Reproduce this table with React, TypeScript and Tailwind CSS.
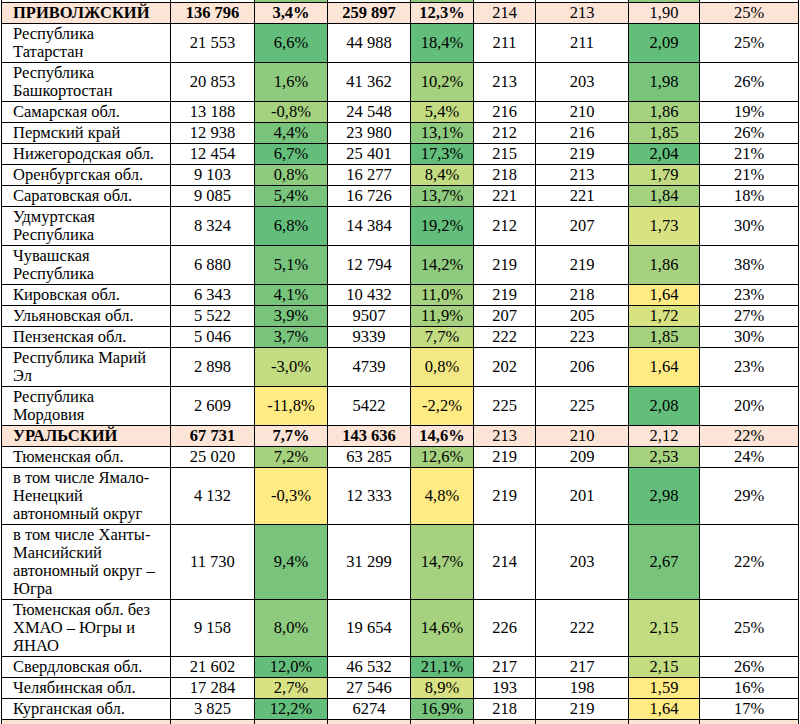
type Row = {
  name: string
  a: string
  b: string
  bc?: string
  c: string
  d: string
  dc?: string
  e: string
  f: string
  g: string
  gc?: string
  h: string
  head?: boolean
}

// conditional-format shades, yellow -> green
const G5 = 'bg-[#63be7b]'
const G4 = 'bg-[#78c47d]'
const G3 = 'bg-[#8ecb7e]'
const G2 = 'bg-[#a6d27f]'
const G1 = 'bg-[#c3dc81]'
const G0 = 'bg-[#d9e282]'
const Y = 'bg-[#ffeb84]'
const Y1 = 'bg-[#f3e884]'

const rows: Row[] = [
  { name: 'ПРИВОЛЖСКИЙ', a: '136 796', b: '3,4%', c: '259 897', d: '12,3%', e: '214', f: '213', g: '1,90', h: '25%', head: true },
  { name: 'Республика Татарстан', a: '21 553', b: '6,6%', bc: G5, c: '44 988', d: '18,4%', dc: G5, e: '211', f: '211', g: '2,09', gc: G5, h: '25%' },
  { name: 'Республика Башкортостан', a: '20 853', b: '1,6%', bc: G3, c: '41 362', d: '10,2%', dc: G2, e: '213', f: '203', g: '1,98', gc: G4, h: '26%' },
  { name: 'Самарская обл.', a: '13 188', b: '-0,8%', bc: G2, c: '24 548', d: '5,4%', dc: G1, e: '216', f: '210', g: '1,86', gc: G2, h: '19%' },
  { name: 'Пермский край', a: '12 938', b: '4,4%', bc: G4, c: '23 980', d: '13,1%', dc: G3, e: '212', f: '216', g: '1,85', gc: G2, h: '26%' },
  { name: 'Нижегородская обл.', a: '12 454', b: '6,7%', bc: G5, c: '25 401', d: '17,3%', dc: G5, e: '215', f: '219', g: '2,04', gc: G5, h: '21%' },
  { name: 'Оренбургская обл.', a: '9 103', b: '0,8%', bc: G3, c: '16 277', d: '8,4%', dc: G1, e: '218', f: '213', g: '1,79', gc: G1, h: '21%' },
  { name: 'Саратовская обл.', a: '9 085', b: '5,4%', bc: G4, c: '16 726', d: '13,7%', dc: G3, e: '221', f: '221', g: '1,84', gc: G2, h: '18%' },
  { name: 'Удмуртская Республика', a: '8 324', b: '6,8%', bc: G5, c: '14 384', d: '19,2%', dc: G5, e: '212', f: '207', g: '1,73', gc: G0, h: '30%' },
  { name: 'Чувашская Республика', a: '6 880', b: '5,1%', bc: G4, c: '12 794', d: '14,2%', dc: G3, e: '219', f: '219', g: '1,86', gc: G2, h: '38%' },
  { name: 'Кировская обл.', a: '6 343', b: '4,1%', bc: G4, c: '10 432', d: '11,0%', dc: G2, e: '219', f: '218', g: '1,64', gc: Y, h: '23%' },
  { name: 'Ульяновская обл.', a: '5 522', b: '3,9%', bc: G4, c: '9507', d: '11,9%', dc: G2, e: '207', f: '205', g: '1,72', gc: G0, h: '27%' },
  { name: 'Пензенская обл.', a: '5 046', b: '3,7%', bc: G4, c: '9339', d: '7,7%', dc: G1, e: '222', f: '223', g: '1,85', gc: G2, h: '30%' },
  { name: 'Республика Марий Эл', a: '2 898', b: '-3,0%', bc: G1, c: '4739', d: '0,8%', dc: Y1, e: '202', f: '206', g: '1,64', gc: Y, h: '23%' },
  { name: 'Республика Мордовия', a: '2 609', b: '-11,8%', bc: Y, c: '5422', d: '-2,2%', dc: Y, e: '225', f: '225', g: '2,08', gc: G5, h: '20%' },
  { name: 'УРАЛЬСКИЙ', a: '67 731', b: '7,7%', c: '143 636', d: '14,6%', e: '213', f: '210', g: '2,12', h: '22%', head: true },
  { name: 'Тюменская обл.', a: '25 020', b: '7,2%', bc: G2, c: '63 285', d: '12,6%', dc: G2, e: '219', f: '209', g: '2,53', gc: G2, h: '24%' },
  { name: 'в том числе Ямало-Ненецкий автономный округ', a: '4 132', b: '-0,3%', bc: Y, c: '12 333', d: '4,8%', dc: Y, e: '219', f: '201', g: '2,98', gc: G5, h: '29%' },
  { name: 'в том числе Ханты-Мансийский автономный округ – Югра', a: '11 730', b: '9,4%', bc: G4, c: '31 299', d: '14,7%', dc: G2, e: '214', f: '203', g: '2,67', gc: G4, h: '22%' },
  { name: 'Тюменская обл. без ХМАО – Югры и ЯНАО', a: '9 158', b: '8,0%', bc: G3, c: '19 654', d: '14,6%', dc: G2, e: '226', f: '222', g: '2,15', gc: G1, h: '25%' },
  { name: 'Свердловская обл.', a: '21 602', b: '12,0%', bc: G5, c: '46 532', d: '21,1%', dc: G5, e: '217', f: '217', g: '2,15', gc: G1, h: '26%' },
  { name: 'Челябинская обл.', a: '17 284', b: '2,7%', bc: G0, c: '27 546', d: '8,9%', dc: G0, e: '193', f: '198', g: '1,59', gc: Y, h: '16%' },
  { name: 'Курганская обл.', a: '3 825', b: '12,2%', bc: G5, c: '6274', d: '16,9%', dc: G4, e: '218', f: '219', g: '1,64', gc: Y, h: '17%' },
]

const serif = "font-['Times_New_Roman','Liberation_Serif',serif]"
const cell = `border border-black px-[4px] py-px text-center align-middle ${serif}`

function DataRow({ r }: { r: Row }) {
  const bg = r.head ? 'bg-[#fce4d6]' : 'bg-white'
  const bold = r.head ? 'font-bold' : 'font-normal'
  return (
    <tr className={bg}>
      <td className={`border border-black py-px pr-[10px] pl-[11px] text-left align-middle ${serif} ${bold}`}>{r.name}</td>
      <td className={`${cell} ${bold}`}>{r.a}</td>
      <td className={`${cell} ${bold} ${r.bc ?? ''}`}>{r.b}</td>
      <td className={`${cell} ${bold}`}>{r.c}</td>
      <td className={`${cell} ${bold} ${r.dc ?? ''}`}>{r.d}</td>
      <td className={cell}>{r.e}</td>
      <td className={cell}>{r.f}</td>
      <td className={`${cell} ${r.gc ?? ''}`}>{r.g}</td>
      <td className={cell}>{r.h}</td>
    </tr>
  )
}

export default function App() {
  return (
    <div className="h-[724px] w-[800px] overflow-hidden bg-white pl-px text-black">
      <table className={`w-[797px] table-fixed border-collapse text-[16.5px] leading-[18px] ${serif}`}>
        <colgroup>
          <col className="w-[169px]" />
          <col className="w-[84px]" />
          <col className="w-[73px]" />
          <col className="w-[83px]" />
          <col className="w-[63px]" />
          <col className="w-[62px]" />
          <col className="w-[93px]" />
          <col className="w-[71px]" />
          <col className="w-[99px]" />
        </colgroup>
        <tbody>
          {/* tail of the row above, cut off by the page edge */}
          <tr className="h-[2px] bg-white">
            <td className="border-x border-black p-0" />
            <td className="border-x border-black p-0" />
            <td className="border-x border-black bg-[#8ecb7e] p-0" />
            <td className="border-x border-black p-0" />
            <td className="border-x border-black bg-[#8ecb7e] p-0" />
            <td className="border-x border-black p-0" />
            <td className="border-x border-black p-0" />
            <td className="border-x border-black bg-[#8ecb7e] p-0" />
            <td className="border-x border-black p-0" />
          </tr>
          {rows.map((r, i) => (
            <DataRow key={i} r={r} />
          ))}
          <tr className="h-[20px] bg-[#fce4d6]">
            {Array.from({ length: 9 }).map((_, i) => (
              <td key={i} className="border border-black p-0" />
            ))}
          </tr>
        </tbody>
      </table>
    </div>
  )
}
